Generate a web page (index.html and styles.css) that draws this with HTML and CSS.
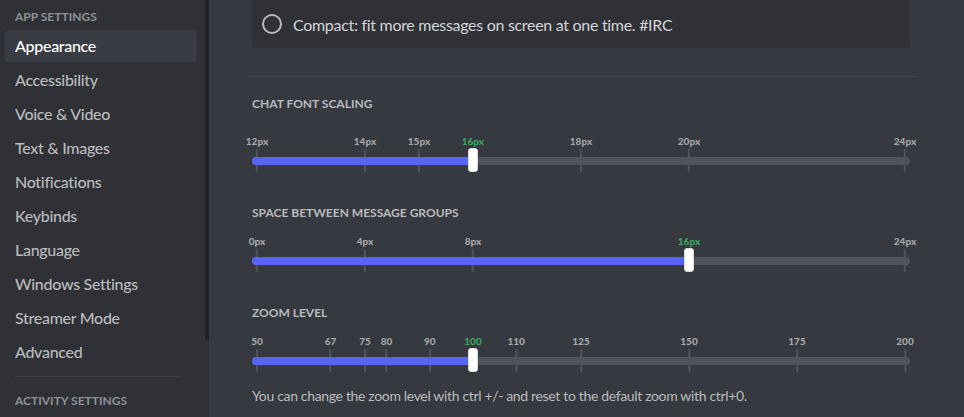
FILE: index.html
```html
<!DOCTYPE html>
<html lang="en">
<head>
    <meta charset="UTF-8">
    <title>User Settings - Appearance</title>
    <link rel="stylesheet" href="styles.css">
</head>
<body>
    <div class="app">
        <!-- Sidebar -->
        <nav class="sidebar">
            <div class="nav">
                <div class="nav-header">App Settings</div>
                <div class="nav-item selected">Appearance</div>
                <div class="nav-item">Accessibility</div>
                <div class="nav-item">Voice &amp; Video</div>
                <div class="nav-item">Text &amp; Images</div>
                <div class="nav-item">Notifications</div>
                <div class="nav-item">Keybinds</div>
                <div class="nav-item">Language</div>
                <div class="nav-item">Windows Settings</div>
                <div class="nav-item">Streamer Mode</div>
                <div class="nav-item">Advanced</div>
                <div class="nav-separator"></div>
                <div class="nav-header">Activity Settings</div>
            </div>
            <div class="scrollbar"><div class="thumb"></div></div>
        </nav>

        <!-- Content -->
        <main class="main">
            <div class="content">
                <div class="radio-card">
                    <span class="radio"></span>
                    <span class="radio-label">Compact: fit more messages on screen at one time. #IRC</span>
                </div>

                <div class="divider"></div>

                <h5 class="section-title first">Chat Font Scaling</h5>
                <div class="slider">
                    <div class="mark" style="left: 0%"><span class="mark-value">12px</span><span class="tick"></span></div>
                    <div class="mark" style="left: 16.667%"><span class="mark-value">14px</span><span class="tick"></span></div>
                    <div class="mark" style="left: 25%"><span class="mark-value">15px</span><span class="tick"></span></div>
                    <div class="mark" style="left: 33.333%"><span class="mark-value active">16px</span><span class="tick"></span></div>
                    <div class="mark" style="left: 50%"><span class="mark-value">18px</span><span class="tick"></span></div>
                    <div class="mark" style="left: 66.667%"><span class="mark-value">20px</span><span class="tick"></span></div>
                    <div class="mark" style="left: 100%"><span class="mark-value">24px</span><span class="tick"></span></div>
                    <div class="track"></div>
                    <div class="fill" style="width: calc(33.333% + 5px)"></div>
                    <div class="grabber" style="left: 33.333%"></div>
                </div>

                <h5 class="section-title">Space Between Message Groups</h5>
                <div class="slider">
                    <div class="mark" style="left: 0%"><span class="mark-value">0px</span><span class="tick"></span></div>
                    <div class="mark" style="left: 16.667%"><span class="mark-value">4px</span><span class="tick"></span></div>
                    <div class="mark" style="left: 33.333%"><span class="mark-value">8px</span><span class="tick"></span></div>
                    <div class="mark" style="left: 66.667%"><span class="mark-value active">16px</span><span class="tick"></span></div>
                    <div class="mark" style="left: 100%"><span class="mark-value">24px</span><span class="tick"></span></div>
                    <div class="track"></div>
                    <div class="fill" style="width: calc(66.667% + 5px)"></div>
                    <div class="grabber" style="left: 66.667%"></div>
                </div>

                <h5 class="section-title">Zoom Level</h5>
                <div class="slider">
                    <div class="mark" style="left: 0%"><span class="mark-value">50</span><span class="tick"></span></div>
                    <div class="mark" style="left: 11.333%"><span class="mark-value">67</span><span class="tick"></span></div>
                    <div class="mark" style="left: 16.667%"><span class="mark-value">75</span><span class="tick"></span></div>
                    <div class="mark" style="left: 20%"><span class="mark-value">80</span><span class="tick"></span></div>
                    <div class="mark" style="left: 26.667%"><span class="mark-value">90</span><span class="tick"></span></div>
                    <div class="mark" style="left: 33.333%"><span class="mark-value active">100</span><span class="tick"></span></div>
                    <div class="mark" style="left: 40%"><span class="mark-value">110</span><span class="tick"></span></div>
                    <div class="mark" style="left: 50%"><span class="mark-value">125</span><span class="tick"></span></div>
                    <div class="mark" style="left: 66.667%"><span class="mark-value">150</span><span class="tick"></span></div>
                    <div class="mark" style="left: 83.333%"><span class="mark-value">175</span><span class="tick"></span></div>
                    <div class="mark" style="left: 100%"><span class="mark-value">200</span><span class="tick"></span></div>
                    <div class="track"></div>
                    <div class="fill" style="width: calc(33.333% + 5px)"></div>
                    <div class="grabber" style="left: 33.333%"></div>
                </div>

                <p class="help">You can change the zoom level with ctrl +/- and reset to the default zoom with ctrl+0.</p>
            </div>
        </main>
    </div>
</body>
</html>
```

FILE: styles.css
```css
* {
    margin: 0;
    padding: 0;
    box-sizing: border-box;
}

html, body {
    height: 100%;
    overflow: hidden;
}

body {
    font-family: Lato, 'Open Sans', sans-serif;
    background-color: #36393f;
    color: #dcddde;
}

.app {
    display: flex;
    height: 100vh;
}

/* sidebar */
.sidebar {
    display: flex;
    width: 209px;
    flex-shrink: 0;
    background-color: #2f3136;
}

.nav {
    width: 205px;
    padding: 3px 8px 0 5px;
}

.nav-header {
    padding: 6px 10px;
    font-size: 12px;
    line-height: 16px;
    font-weight: 700;
    text-transform: uppercase;
    color: #8e9297;
}

.nav-item {
    height: 32px;
    line-height: 32px;
    padding: 0 10px;
    margin-bottom: 2px;
    border-radius: 4px;
    font-size: 16px;
    font-weight: 500;
    letter-spacing: -0.3px;
    color: #b9bbbe;
    white-space: nowrap;
}

.nav-header + .nav-item {
    margin-top: -1px;
}

.nav-item.selected {
    background-color: #393c43;
    color: #ffffff;
}

.nav-separator {
    height: 1px;
    margin: 8px 15px 10px 8px;
    background-color: #3b3e44;
}

.scrollbar {
    width: 4px;
}

.thumb {
    height: 340px;
    background-color: #202225;
    border-radius: 0 0 2px 2px;
}

/* content */
.main {
    flex: 1;
    padding-left: 43px;
}

.content {
    width: 658px;
}

.radio-card {
    display: flex;
    align-items: center;
    height: 48px;
    padding-left: 10px;
    background-color: #2f3136;
    border-radius: 0 0 4px 4px;
}

.radio {
    width: 20px;
    height: 20px;
    border: 2px solid #b9bbbe;
    border-radius: 50%;
    margin-right: 11px;
}

.radio-label {
    font-size: 16px;
    letter-spacing: -0.3px;
    color: #d2d4d6;
}

.divider {
    height: 1px;
    margin: 28px -7px 0 -5px;
    background-color: #42454b;
}

.section-title {
    margin-top: 32px;
    font-size: 12px;
    line-height: 16px;
    font-weight: 700;
    text-transform: uppercase;
    color: #b9bbbe;
}

.section-title.first {
    margin-top: 19px;
}

/* slider */
.slider {
    position: relative;
    height: 40px;
    margin: 12px 5px 0 5px;
}

.section-title.first + .slider {
    margin-top: 21px;
}

.mark {
    position: absolute;
    top: 0;
    display: flex;
    flex-direction: column;
    align-items: center;
    transform: translateX(-50%);
}

.mark-value {
    font-size: 10px;
    line-height: 16px;
    font-weight: 900;
    color: #a3a6aa;
    white-space: nowrap;
}

.mark-value.active {
    color: #3ba55c;
}

.tick {
    width: 2px;
    height: 23px;
    background-color: #4f545c;
}

.track,
.fill {
    position: absolute;
    top: 24px;
    left: -5px;
    height: 8px;
    border-radius: 4px;
}

.track {
    right: -5px;
    background-color: #4f545c;
}

.fill {
    background-color: #5865f2;
}

.grabber {
    position: absolute;
    top: 15px;
    width: 10px;
    height: 24px;
    margin-left: -5px;
    background-color: #ffffff;
    border: 1px solid #dcddde;
    border-radius: 3px;
}

.help {
    margin-top: 14px;
    font-size: 14px;
    line-height: 18px;
    letter-spacing: -0.34px;
    color: #b9bbbe;
}
```
